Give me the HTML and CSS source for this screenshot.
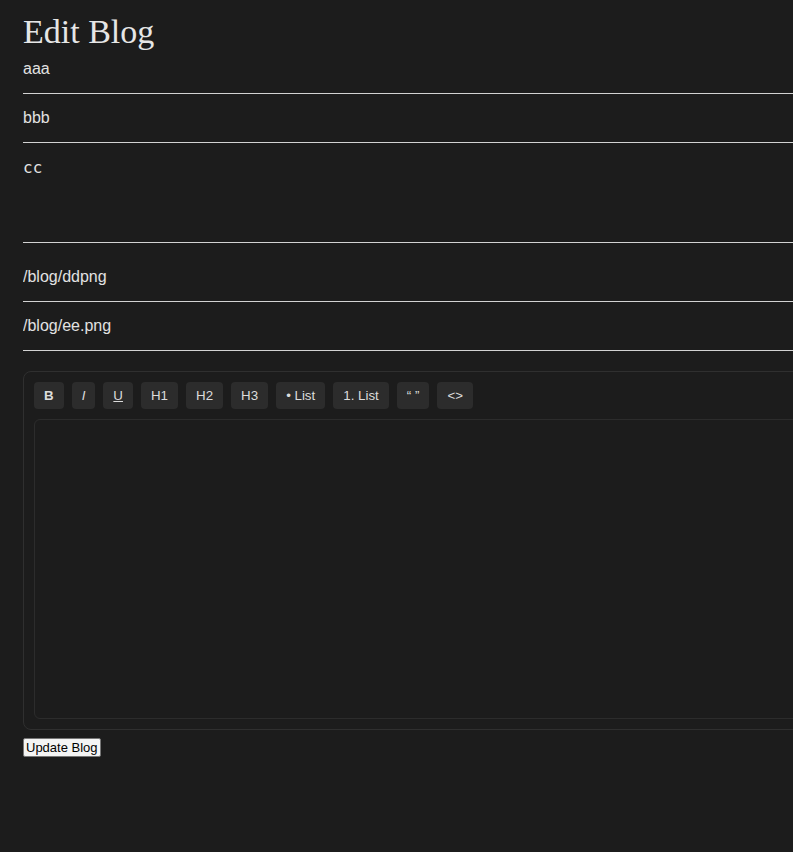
FILE: index.html
```html
<!DOCTYPE html>
<html lang="en">
<head>
<meta charset="utf-8">
<title>Edit Blog</title>
<link rel="stylesheet" href="styles.css">
</head>
<body>
<div class="page">
  <h1 class="title">Edit Blog</h1>
  <form class="form">
    <div class="row"><input class="field" type="text" value="aaa"></div>
    <div class="row"><input class="field" type="text" value="bbb"></div>
    <div class="row row-area"><textarea class="field area">cc</textarea></div>
    <div class="row"><input class="field" type="text" value="/blog/ddpng"></div>
    <div class="row"><input class="field" type="text" value="/blog/ee.png"></div>
    <div class="editor">
      <div class="toolbar">
        <button type="button" class="tb tb-b">B</button>
        <button type="button" class="tb tb-i">I</button>
        <button type="button" class="tb tb-u">U</button>
        <button type="button" class="tb">H1</button>
        <button type="button" class="tb">H2</button>
        <button type="button" class="tb">H3</button>
        <button type="button" class="tb">• List</button>
        <button type="button" class="tb">1. List</button>
        <button type="button" class="tb">“ ”</button>
        <button type="button" class="tb">&lt;&gt;</button>
      </div>
      <div class="content"></div>
    </div>
    <div class="actions">
      <button type="submit" class="submit">Update Blog</button>
    </div>
  </form>
</div>
</body>
</html>
```
FILE: styles.css
```css
html {
  background: #1c1c1c;
}
body {
  margin: 8px 0 8px 8px;
  background: #1c1c1c;
  color: #e2e2e2;
  font-family: "Liberation Sans", Arial, sans-serif;
  overflow: hidden;
}
.page {
  padding: 11px 0 0 15px;
}
.title {
  margin: 0;
  font-family: "Liberation Serif", "Times New Roman", serif;
  font-weight: 400;
  font-size: 34px;
  line-height: 26px;
  color: #e6e6e6;
}
.form {
  width: 800px;
  display: flex;
  flex-direction: column;
}
.row {
  display: flex;
  box-shadow: inset 0 -1px 0 #d2d2d2;
}
.row-area {
  margin-bottom: 10px;
}
.field {
  flex: 1;
  min-width: 0;
  box-sizing: border-box;
  margin: 0;
  padding: 15px 0 16px;
  background: transparent;
  border: 0;
  color: #e2e2e2;
  font-family: "Liberation Sans", Arial, sans-serif;
  font-size: 16px;
  line-height: 18px;
  outline: none;
}
.area {
  height: 100px;
  font-family: "DejaVu Sans Mono", monospace;
  font-size: 16px;
  line-height: 19px;
  resize: none;
}
.editor {
  margin-top: 20px;
  border: 1px solid #2f2f2f;
  border-radius: 8px;
  padding: 10px;
  display: flex;
  flex-direction: column;
  gap: 10px;
}
.toolbar {
  display: flex;
  gap: 8px;
}
.tb {
  margin: 0;
  padding: 6px 10px;
  border: 0;
  border-radius: 4px;
  background: #2c2c2c;
  color: #dcdcdc;
  font-family: "Liberation Sans", Arial, sans-serif;
  font-size: 13.33px;
  line-height: 15px;
}
.tb-b { font-weight: 700; }
.tb-i { font-style: italic; }
.tb-u { text-decoration: underline; }
.content {
  height: 298px;
  border: 1px solid #2c2c2c;
  border-radius: 6px;
}
.actions {
  display: flex;
  padding-top: 8px;
}
.submit {
  margin: 0;
  padding: 1px 2px;
  border: 1px solid #767676;
  border-radius: 2px;
  background: #f4f4f4;
  color: #000;
  font-family: "Liberation Sans", Arial, sans-serif;
  font-size: 13px;
  line-height: 15px;
}
```
